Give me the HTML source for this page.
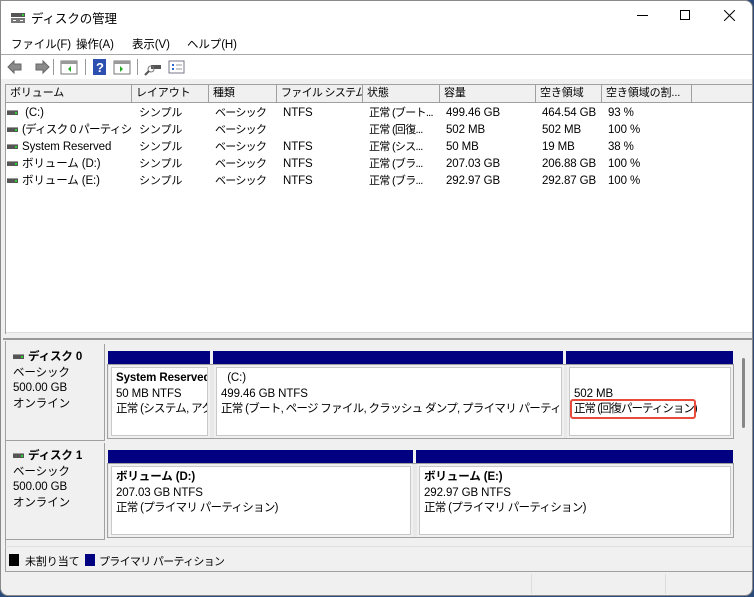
<!DOCTYPE html>
<html><head><meta charset="utf-8"><style>
*{margin:0;padding:0;box-sizing:border-box}
body{width:754px;height:597px;overflow:hidden;background:#2a4a7a;font-family:"Liberation Sans","Noto Sans CJK JP",sans-serif;font-size:11px;letter-spacing:-0.1px;color:#000;position:relative}
.a{position:absolute;white-space:nowrap}
.j{letter-spacing:-0.7px}
#win{position:absolute;left:0;top:0;width:753px;height:596px;background:#f0f0f0;border:1px solid #8a8a8a;border-radius:0 8px 8px 8px;overflow:hidden}
.hd{position:absolute;top:84px;height:18px;background:#f0f0f0;border-right:1px solid #a0a0a0;border-bottom:1px solid #a0a0a0;padding-left:4px;line-height:17px;overflow:hidden;white-space:nowrap}
.drv{display:inline-block;width:11px;height:5px;background:#555;border-top:1px solid #999;vertical-align:middle;margin-right:4px;position:relative}
.drv:after{content:"";position:absolute;right:1px;top:1px;width:2px;height:2px;background:#3c3}
.bar{position:absolute;height:13px;background:#000080}
.pb{position:absolute;background:#fff;border:1px solid #c8c8c8;outline:2px solid #f0f0f0;padding:3px 4px;line-height:15.5px;overflow:hidden;white-space:nowrap}
.pbw{position:absolute;background:#e8e8e8;border:1px solid #a0a0a0}
.lab{position:absolute;left:5px;width:99px;background:#f0f0f0;border-right:1px solid #a0a0a0;border-bottom:1px solid #a0a0a0;padding:6px 7px;line-height:15.5px}
.col{position:absolute;top:0;line-height:17px;overflow:hidden;white-space:nowrap}
</style></head><body>
<div id="win">
<div class="a" style="left:0;top:0;width:754px;height:53px;background:#fff"></div>
<svg class="a" style="left:9px;top:9px" width="16" height="14"><rect x="1" y="3" width="14" height="4" fill="#555"/><rect x="12" y="4" width="2" height="2" fill="#3c3"/><rect x="1" y="8" width="14" height="5" fill="#777"/><rect x="3" y="10" width="3" height="1" fill="#fff"/><rect x="10" y="10" width="3" height="1" fill="#fff"/></svg>
<div class="a" style="left:30px;top:7px;font-size:12.5px">ディスクの管理</div>
<div class="a" style="left:636px;top:14px;width:11px;height:1px;background:#000"></div>
<div class="a" style="left:679px;top:9px;width:10px;height:10px;border:1px solid #000"></div>
<svg class="a" style="left:723px;top:9px" width="11" height="11"><path d="M0 0L11 11M11 0L0 11" stroke="#000" stroke-width="1"/></svg>
<div class="a" style="left:10px;top:35px;font-size:11.5px">ファイル(F)</div>
<div class="a" style="left:75px;top:35px;font-size:11.5px">操作(A)</div>
<div class="a" style="left:131px;top:35px;font-size:11.5px">表示(V)</div>
<div class="a" style="left:186px;top:35px;font-size:11.5px">ヘルプ(H)</div>
<div class="a" style="left:0;top:53px;width:754px;height:1px;background:#a8a8a8"></div>
<div class="a" style="left:0;top:54px;width:754px;height:24px;background:#fff"></div>
<svg class="a" style="left:4px;top:57px" width="180" height="18">
<path d="M3 9L9 3V6H16V12H9V15Z" fill="#8a8a8a" stroke="#666"/>
<path d="M44 9L38 3V6H31V12H38V15Z" fill="#8a8a8a" stroke="#666"/>
<rect x="48" y="1" width="1" height="16" fill="#999"/>
<rect x="56" y="3" width="16" height="13" fill="#fff" stroke="#777"/><rect x="56" y="3" width="16" height="3" fill="#999"/><path d="M66 8V14L63 11Z" fill="#2a2"/>
<rect x="80" y="1" width="1" height="16" fill="#999"/>
<rect x="88" y="1" width="13" height="16" fill="#2d4fb0"/><text x="91" y="14" fill="#fff" font-size="13" font-weight="bold" font-family="Liberation Sans">?</text>
<rect x="109" y="3" width="16" height="13" fill="#fff" stroke="#777"/><rect x="109" y="3" width="16" height="3" fill="#999"/><path d="M115 8V14L118 11Z" fill="#2a2"/>
<rect x="132" y="1" width="1" height="16" fill="#999"/>
<rect x="146" y="7" width="10" height="4" fill="#555"/><circle cx="146" cy="11" r="3" fill="none" stroke="#777"/><path d="M144 13L140 17" stroke="#555" stroke-width="2"/>
<rect x="164" y="3" width="15" height="12" fill="#fff" stroke="#778"/><path d="M167 7H169M167 11H169" stroke="#36c" stroke-width="2"/><path d="M171 7H177M171 11H177" stroke="#999"/>
</svg>
<div class="a" style="left:4px;top:83px;width:748px;height:250px;background:#fff;border:1px solid #a0a0a0"></div>
<div class="hd" style="left:5px;width:126px">ボリューム</div>
<div class="hd" style="left:131px;width:77px">レイアウト</div>
<div class="hd" style="left:208px;width:68px">種類</div>
<div class="hd j" style="left:276px;width:86px">ファイル システム</div>
<div class="hd" style="left:362px;width:77px">状態</div>
<div class="hd" style="left:439px;width:96px">容量</div>
<div class="hd" style="left:535px;width:66px">空き領域</div>
<div class="hd" style="left:601px;width:90px">空き領域の割...</div>
<div class="hd" style="left:691px;width:61px;border-right:none"></div>
<div style="position:absolute;left:2px;top:104px">
<div class="col" style="left:4px;width:124px;font-size:11.5px"><span class="drv"></span> (C:)<br><span class="drv"></span><span class="j">(ディスク 0 パーティシ...</span><br><span class="drv"></span>System Reserved<br><span class="drv"></span>ボリューム (D:)<br><span class="drv"></span>ボリューム (E:)</div>
<div class="col" style="left:136px">シンプル<br>シンプル<br>シンプル<br>シンプル<br>シンプル</div>
<div class="col j" style="left:212px">ベーシック<br>ベーシック<br>ベーシック<br>ベーシック<br>ベーシック</div>
<div class="col" style="left:280px;font-size:11.5px">NTFS<br>&nbsp;<br>NTFS<br>NTFS<br>NTFS</div>
<div class="col j" style="left:366px">正常 (ブート...<br>正常 (回復...<br>正常 (シス...<br>正常 (ブラ...<br>正常 (ブラ...</div>
<div class="col" style="left:443px;font-size:11.5px">499.46 GB<br>502 MB<br>50 MB<br>207.03 GB<br>292.97 GB</div>
<div class="col" style="left:539px;font-size:11.5px">464.54 GB<br>502 MB<br>19 MB<br>206.88 GB<br>292.87 GB</div>
<div class="col" style="left:605px;font-size:11.5px">93 %<br>100 %<br>38 %<br>100 %<br>100 %</div>
</div>
<div class="a" style="left:5px;top:331px;width:746px;height:5px;background:#f0f0f0;border-top:1px solid #ddd"></div>
<div class="a" style="left:2px;top:337px;width:750px;height:2px;background:#999"></div>
<div class="a" style="left:4px;top:340px;width:729px;height:205px;background:#f0f0f0;border-left:1px solid #a0a0a0"></div>
<div class="a" style="left:741px;top:357px;width:3px;height:70px;background:#888;border-radius:2px"></div>
<div class="lab" style="top:343px;height:97px;font-size:11.5px"><span class="drv"></span><b>ディスク 0</b><br>ベーシック<br>500.00 GB<br>オンライン</div>
<div class="bar" style="left:107px;top:350px;width:102px"></div>
<div class="bar" style="left:212px;top:350px;width:350px"></div>
<div class="bar" style="left:565px;top:350px;width:167px"></div>
<div class="pbw" style="left:106px;top:363px;width:627px;height:75px"></div>
<div class="pb" style="left:110px;top:366px;width:97px;height:69px;font-size:11.5px"><b>System Reserved</b><br>50 MB NTFS<br><span class="j">正常 (システム, アク</span></div>
<div class="pb" style="left:215px;top:366px;width:346px;height:69px;font-size:11.5px">&nbsp;&nbsp;(C:)<br>499.46 GB NTFS<br><span class="j">正常 (ブート, ページ ファイル, クラッシュ ダンプ, プライマリ パーティション)</span></div>
<div class="pb" style="left:568px;top:366px;width:162px;height:69px;font-size:11.5px"><br>502 MB<br><span style="letter-spacing:-1px">正常 (回復パーティション)</span></div>
<div class="a" style="left:569px;top:398px;width:126px;height:20px;border:2px solid #e84a3c;border-radius:3px"></div>
<div class="lab" style="top:442px;height:97px;font-size:11.5px"><span class="drv"></span><b>ディスク 1</b><br>ベーシック<br>500.00 GB<br>オンライン</div>
<div class="bar" style="left:107px;top:449px;width:305px"></div>
<div class="bar" style="left:415px;top:449px;width:317px"></div>
<div class="pbw" style="left:106px;top:462px;width:627px;height:75px"></div>
<div class="pb" style="left:110px;top:465px;width:300px;height:69px;font-size:11.5px"><b>ボリューム (D:)</b><br>207.03 GB NTFS<br><span class="j">正常 (プライマリ パーティション)</span></div>
<div class="pb" style="left:418px;top:465px;width:312px;height:69px;font-size:11.5px"><b>ボリューム (E:)</b><br>292.97 GB NTFS<br><span class="j">正常 (プライマリ パーティション)</span></div>
<div class="a" style="left:4px;top:545px;width:748px;height:26px;background:#f0f0f0;border:1px solid #a0a0a0;border-top:1px solid #e0e0e0"></div>
<div class="a" style="left:8px;top:553px;width:10px;height:12px;background:#000"></div>
<div class="a" style="left:24px;top:552px">未割り当て</div>
<div class="a" style="left:84px;top:553px;width:10px;height:12px;background:#000080"></div>
<div class="a j" style="left:98px;top:552px">プライマリ パーティション</div>
<div class="a" style="left:530px;top:573px;width:1px;height:20px;background:#ddd"></div>
<div class="a" style="left:664px;top:573px;width:1px;height:20px;background:#ddd"></div>
</div>
</body></html>
